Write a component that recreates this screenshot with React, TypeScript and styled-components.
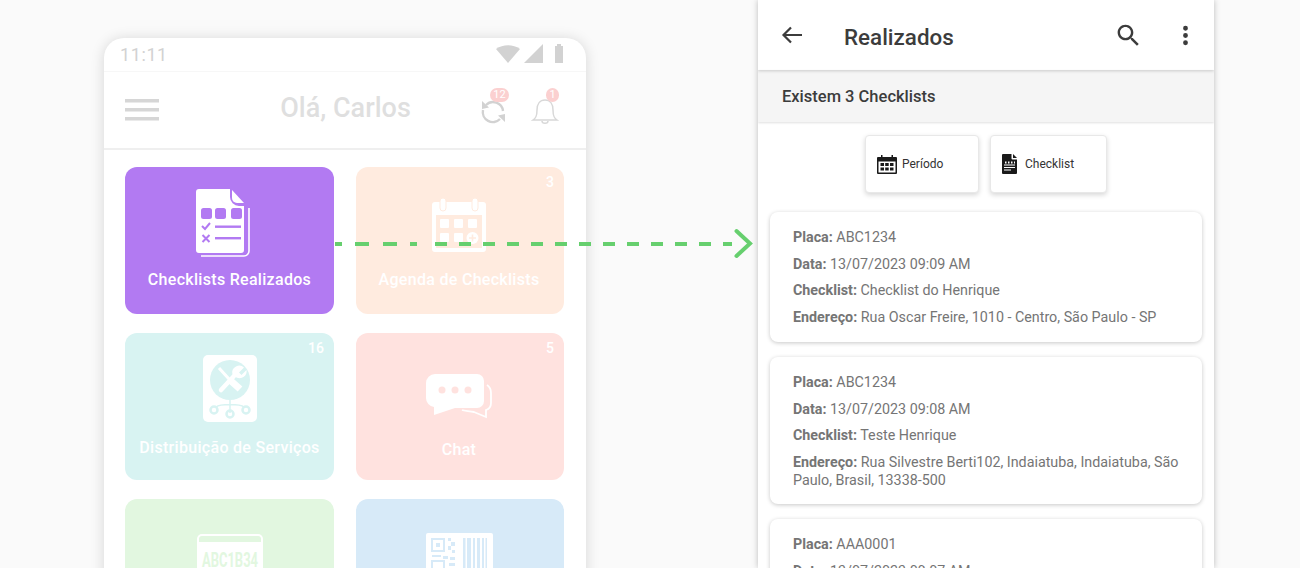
import React from "react";
import styled, { createGlobalStyle } from "styled-components";

const GlobalStyle = createGlobalStyle`
    html, body {
        margin: 0;
        padding: 0;
        height: 568px;
        overflow: hidden;
        background: #FAFAFA;
        font-family: Roboto, "Liberation Sans", sans-serif;
    }
`;

const Page = styled.div`
    position: relative;
    display: flex;
    align-items: flex-start;
    width: 1300px;
    height: 568px;
    padding-left: 104px;
    box-sizing: border-box;
    overflow: hidden;
    background: #FAFAFA;
`;

/* left phone */
const HomePhone = styled.div`
    flex: none;
    width: 482px;
    height: 560px;
    margin-top: 38px;
    background: #FFFFFF;
    border-radius: 20px 20px 0 0;
    box-shadow: 0 1px 14px rgba(0, 0, 0, 0.15);
`;
const StatusBar = styled.div`
    display: flex;
    justify-content: space-between;
    align-items: center;
    height: 33px;
    padding: 0 20px 0 16px;
    border-bottom: 1px solid #F7F7F7;
`;
const Clock = styled.span`
    font-size: 18px;
    letter-spacing: 0.6px;
    color: #D2D2D2;
`;
const StatusIcons = styled.div`
    display: flex;
    align-items: center;
`;
const HomeHeader = styled.div`
    display: flex;
    align-items: center;
    height: 76px;
    padding: 0 27px 0 21px;
    border-bottom: 2px solid #EFEFEF;
`;
const HomeTitle = styled.div`
    flex: 1;
    text-align: center;
    padding: 0 0 4px 77px;
    font-size: 27px;
    font-weight: 500;
    color: #DFDFDF;
`;
const HeaderIcon = styled.div`
    position: relative;
    width: 28px;
    height: 28px;
    margin-left: 24px;
`;
const Badge = styled.span<{ $right: number; $w: number }>`
    position: absolute;
    top: -8px;
    right: ${(p) => p.$right}px;
    width: ${(p) => p.$w}px;
    height: 14px;
    border-radius: 7px;
    background: #FBD0D0;
    color: #FFFFFF;
    font-size: 11px;
    line-height: 14px;
    text-align: center;
`;
const TileGrid = styled.div`
    display: grid;
    grid-template-columns: 209px 208px;
    grid-auto-rows: 147px;
    column-gap: 22px;
    row-gap: 19px;
    padding: 17px 0 0 21px;
`;
const Tile = styled.div<{ $bg: string }>`
    position: relative;
    display: flex;
    flex-direction: column;
    align-items: center;
    border-radius: 12px;
    background: ${(p) => p.$bg};
    color: #FFFFFF;
`;
const TileIcon = styled.div<{ $top: number; $shift: number }>`
    margin-top: ${(p) => p.$top}px;
    margin-left: ${(p) => p.$shift}px;
    svg { display: block; }
`;
const TileLabel = styled.div<{ $top: number; $pad: number }>`
    margin-top: ${(p) => p.$top}px;
    padding-right: ${(p) => p.$pad}px;
    font-size: 16px;
    line-height: 19px;
    font-weight: 500;
    letter-spacing: 0.3px;
    white-space: nowrap;
`;
const TileCount = styled.span`
    position: absolute;
    top: 7px;
    right: 10px;
    font-size: 14px;
    font-weight: 500;
`;

/* connector */
const Connector = styled.svg`
    position: absolute;
    left: 334px;
    top: 226px;
`;

/* right phone */
const ListPhone = styled.div`
    flex: none;
    width: 456px;
    height: 568px;
    margin-left: 172px;
    background: #FFFFFF;
    box-shadow: 0 0 6px rgba(0, 0, 0, 0.25);
    overflow: hidden;
`;
const ListHeader = styled.div`
    position: relative;
    display: flex;
    align-items: center;
    height: 70px;
    padding: 0 14px 0 23px;
    box-sizing: border-box;
    box-shadow: 0 1px 3px rgba(0, 0, 0, 0.18);
`;
const ListTitle = styled.div`
    flex: 1;
    margin-left: 42px;
    padding-top: 3px;
    font-size: 22.4px;
    font-weight: 500;
    color: #3C3C3C;
`;
const ToolIcon = styled.svg<{ $gap: number }>`
    display: block;
    margin-left: ${(p) => p.$gap}px;
`;
const CountBar = styled.div`
    display: flex;
    align-items: center;
    height: 52px;
    padding-left: 24px;
    background: #F5F5F5;
    box-shadow: 0 1px 2px rgba(0, 0, 0, 0.12);
    font-size: 16.5px;
    font-weight: 500;
    color: #3C3C3C;
`;
const FilterRow = styled.div`
    display: flex;
    justify-content: flex-start;
    gap: 11px;
    padding: 13px 0 0 107px;
`;
const FilterButton = styled.div<{ $w: number; $gap: number }>`
    display: flex;
    align-items: center;
    gap: ${(p) => p.$gap}px;
    width: ${(p) => p.$w}px;
    height: 58px;
    padding-left: 11px;
    box-sizing: border-box;
    border-radius: 4px;
    background: #FFFFFF;
    border: 1px solid #E8E8E8;
    box-shadow: 0 2px 5px rgba(0, 0, 0, 0.16);
    font-size: 12px;
    color: #333333;
`;
const CardList = styled.div`
    display: flex;
    flex-direction: column;
    gap: 15px;
    padding: 19px 12px 0;
`;
const Card = styled.div`
    padding: 17px 22px 15px 23px;
    border-radius: 8px;
    background: #FFFFFF;
    box-shadow: 0 1px 4px rgba(0, 0, 0, 0.22);
`;
const CardLine = styled.div`
    margin-bottom: 9px;
    font-size: 14.3px;
    line-height: 17.7px;
    color: #757575;
    &:last-child { margin-bottom: 0; }
    b { font-weight: 700; }
`;

const DocIcon = () => (
    <svg width="54" height="68" viewBox="0 0 54 68">
        <path d="M3 0h31v8a9 9 0 0 0 9 9h5v44a3 3 0 0 1-3 3H3a3 3 0 0 1-3-3V3a3 3 0 0 1 3-3z" fill="#fff" />
        <path d="M36 1l12 13h-7a5 5 0 0 1-5-5z" fill="#fff" />
        <path d="M53 19v43a5 5 0 0 1-5 5H5" fill="none" stroke="#fff" strokeWidth="1.6" />
        <g fill="#B27AF2">
            <rect x="5" y="19" width="11" height="11" rx="2.500" />
            <rect x="19" y="19" width="11" height="11" rx="2.500" />
            <rect x="35" y="19" width="11" height="11" rx="2.500" />
            <rect x="19" y="36.500" width="26" height="2.400" />
            <rect x="19" y="48" width="26" height="2.400" />
        </g>
        <path d="M6 37l3 3 5-6M6.500 46l7 7M13.500 46l-7 7" fill="none" stroke="#B27AF2" strokeWidth="2" />
    </svg>
);

const CalendarIcon = () => (
    <svg width="54" height="56" viewBox="0 0 54 56">
        <path d="M3 4h48a3 3 0 0 1 3 3v44a3 3 0 0 1-3 3H3a3 3 0 0 1-3-3V7a3 3 0 0 1 3-3zM4 17v33h46V17z" fill="#fff" fillRule="evenodd" />
        <rect x="8" y="0" width="6" height="13" rx="3" fill="#fff" stroke="#FFEBDF" strokeWidth="1" />
        <rect x="40" y="0" width="6" height="13" rx="3" fill="#fff" stroke="#FFEBDF" strokeWidth="1" />
        <g fill="#fff">
            <rect x="8" y="21" width="9" height="9" rx="1" />
            <rect x="22" y="21" width="9" height="9" rx="1" />
            <rect x="36" y="21" width="9" height="9" rx="1" />
            <rect x="8" y="35" width="9" height="9" rx="1" />
            <rect x="22" y="35" width="9" height="9" rx="1" />
            <circle cx="40.500" cy="40" r="6" />
        </g>
        <path d="M40.500 36.500v7M37 40h7" stroke="#FFEBDF" strokeWidth="1.600" />
    </svg>
);

const ToolsIcon = () => (
    <svg width="54" height="68" viewBox="0 0 54 68">
        <rect width="54" height="67" rx="5" fill="#fff" />
        <circle cx="27" cy="25" r="20" fill="#D8F3F2" />
        <path d="M16 13l10 11" stroke="#fff" strokeWidth="3" />
        <path d="M28 26l9 8" stroke="#fff" strokeWidth="7" />
        <path d="M18 35l13-14" stroke="#fff" strokeWidth="4.500" strokeLinecap="round" />
        <path d="M33 11.500a7 7 0 0 1 8 1l-5 5 2.500 2.500 5-5a7 7 0 0 1-10 7.500l-4-3a7 7 0 0 1 3.500-8z" fill="#fff" />
        <path d="M27 45v13M13 52c4-3.500 24-3.500 28 0" fill="none" stroke="#D8F3F2" strokeWidth="1.500" />
        <circle cx="11" cy="55" r="3.500" fill="none" stroke="#D8F3F2" strokeWidth="2.500" />
        <circle cx="27" cy="59" r="3.500" fill="none" stroke="#D8F3F2" strokeWidth="2.500" />
        <circle cx="43" cy="55" r="3.500" fill="none" stroke="#D8F3F2" strokeWidth="2.500" />
    </svg>
);

const ChatIcon = () => (
    <svg width="68" height="46" viewBox="0 0 68 46">
        <path d="M10 1h42a7 7 0 0 1 7 7v20a7 7 0 0 1-7 7H30L9 42v-8a9 9 0 0 1-8-9V10a9 9 0 0 1 9-9z" fill="#fff" />
        <path d="M62 12c3 2 4 5 4 8v10c0 4-2 6-5 7v7l-12-5c-5-1-10-1-12-2" fill="none" stroke="#fff" strokeWidth="1.800" />
        <g fill="#FFE2DF">
            <circle cx="17" cy="17" r="3.500" />
            <circle cx="30" cy="17" r="3.500" />
            <circle cx="43" cy="17" r="3.500" />
        </g>
    </svg>
);

const PlateIcon = () => (
    <svg width="68" height="40" viewBox="0 0 68 40">
        <path d="M6 1h56a5 5 0 0 1 5 5v34H1V6a5 5 0 0 1 5-5z" fill="#fff" />
        <path d="M6 3h56a3 3 0 0 1 3 3v3H3V6a3 3 0 0 1 3-3z" fill="#E2F7E0" />
        <text x="6" y="34" fontFamily="Roboto, sans-serif" fontSize="20" fontWeight="700" fill="#E2F7E0" textLength="56" lengthAdjust="spacingAndGlyphs">ABC1B34</text>
    </svg>
);

const CodeIcon = () => (
    <svg width="67" height="40" viewBox="0 0 67 40">
        <rect x="0" y="0" width="67" height="40" rx="2" fill="#fff" />
        <g fill="none" stroke="#D7EAF8" strokeWidth="2">
            <rect x="6" y="6" width="12" height="12" />
            <rect x="6" y="28" width="12" height="12" />
        </g>
        <g fill="#D7EAF8">
            <rect x="10" y="10" width="4" height="4" />
            <path d="M22 5h3v3h-3zM25 9h4v4h-4zM22 13h3v4h-3zM26 17h3v3h-3zM6 22h9v2H6zM17 23h5v3h-5zM24 24h5v3h-5zM23 30h6v3h-6zM25 35h4v5h-4z" />
            <path d="M37 5h2.500v35H37zM41 5h4v35h-4zM47 5h2v35h-2zM51 5h3v35h-3zM56 5h2v35h-2zM59.500 5h1.500v35h-1.500z" />
        </g>
    </svg>
);

const tiles = [
    { label: "Checklists Realizados", bg: "#B27AF2", icon: <DocIcon />, top: 22, gap: 13, shift: -13, pad: 0 },
    { label: "Agenda de Checklists", bg: "#FFEBDF", icon: <CalendarIcon />, top: 31, gap: 16, shift: -2, pad: 2, count: "3" },
    { label: "Distribuição de Serviços", bg: "#D8F3F2", icon: <ToolsIcon />, top: 22, gap: 14.5, shift: 0, pad: 0, count: "16" },
    { label: "Chat", bg: "#FFE2DF", icon: <ChatIcon />, top: 40, gap: 21, shift: -3, pad: 2, count: "5" },
    { label: "", bg: "#E2F7E0", icon: <PlateIcon />, top: 34, gap: 0, shift: 0, pad: 0 },
    { label: "", bg: "#D7EAF8", icon: <CodeIcon />, top: 34, gap: 0, shift: -2, pad: 0 },
];

const cards = [
    { placa: "ABC1234", data: "13/07/2023 09:09 AM", checklist: "Checklist do Henrique", end: "Rua Oscar Freire, 1010 - Centro, São Paulo - SP" },
    { placa: "ABC1234", data: "13/07/2023 09:08 AM", checklist: "Teste Henrique", end: "Rua Silvestre Berti102, Indaiatuba, Indaiatuba, São Paulo, Brasil, 13338-500" },
    { placa: "AAA0001", data: "13/07/2023 09:07 AM", checklist: "Teste Henrique", end: "Rua Oscar Freire" },
];

function App() {
    return (
        <Page>
            <GlobalStyle />
            <HomePhone>
                <StatusBar>
                    <Clock>11:11</Clock>
                    <StatusIcons>
                        <svg width="70" height="22" viewBox="0 0 70 22">
                            <path d="M0 5c7-5 17-5 24 0l-12 14z" fill="#D2D2D2" />
                            <path d="M28 19L47 0v19z" fill="#D2D2D2" />
                            <path d="M59 2h2V0h4v2h2v17H59z" fill="#D2D2D2" />
                        </svg>
                    </StatusIcons>
                </StatusBar>
                <HomeHeader>
                    <svg width="34" height="22" viewBox="0 0 34 22">
                        <path d="M0 0h34v3.500H0zM0 9h34v3.500H0zM0 18h34v3.500H0z" fill="#D6D6D6" />
                    </svg>
                    <HomeTitle>Olá, Carlos</HomeTitle>
                    <HeaderIcon>
                        <svg width="28" height="28" viewBox="0 0 28 28">
                            <path d="M7 9A10 10 0 0 1 24 15" fill="none" stroke="#D2D2D2" strokeWidth="2.400" />
                            <path d="M4 14A10 10 0 0 0 21 23" fill="none" stroke="#D2D2D2" strokeWidth="2.400" />
                            <path d="M3 5v8l7-1.500zM26 26v-8l-7 1.500z" fill="#D2D2D2" />
                        </svg>
                        <Badge $right={-2} $w={19}>12</Badge>
                    </HeaderIcon>
                    <HeaderIcon>
                        <svg width="28" height="28" viewBox="0 0 28 28">
                            <path d="M2 24c3-2 4-4 4-10 0-6 3-10 8-10s8 4 8 10c0 6 1 8 4 10z" fill="none" stroke="#D8D8D8" strokeWidth="1.500" />
                            <path d="M11 25c0 3 6 3 6 0" fill="none" stroke="#D8D8D8" strokeWidth="1.500" />
                        </svg>
                        <Badge $right={0} $w={13}>1</Badge>
                    </HeaderIcon>
                </HomeHeader>
                <TileGrid>
                    {tiles.map((t, i) => (
                        <Tile key={i} $bg={t.bg}>
                            {t.count && <TileCount>{t.count}</TileCount>}
                            <TileIcon $top={t.top} $shift={t.shift}>{t.icon}</TileIcon>
                            {t.label && <TileLabel $top={t.gap} $pad={t.pad}>{t.label}</TileLabel>}
                        </Tile>
                    ))}
                </TileGrid>
            </HomePhone>
            <Connector width="420" height="36" viewBox="0 0 420 36">
                <path d="M1 18H89" fill="none" stroke="#66CF6E" strokeWidth="4" strokeDasharray="7 13 14 14 14 13" />
                <path d="M101 18H398" fill="none" stroke="#66CF6E" strokeWidth="4" strokeDasharray="12 12" />
                <path d="M402.500 5L416 17.500L402.500 30" fill="none" stroke="#66CF6E" strokeWidth="4" strokeLinecap="round" />
            </Connector>
            <ListPhone>
                <ListHeader>
                    <svg width="21" height="18" viewBox="0 0 21 18">
                        <path d="M21 9H2.500M10 1.500L2.500 9l7.500 7.500" fill="none" stroke="#3C3C3C" strokeWidth="2.200" />
                    </svg>
                    <ListTitle>Realizados</ListTitle>
                    <ToolIcon $gap={0} width="29" height="29" viewBox="0 0 24 24">
                        <path d="M15.500 14h-.79l-.28-.27C15.410 12.590 16 11.110 16 9.500 16 5.910 13.090 3 9.500 3S3 5.910 3 9.500 5.910 16 9.500 16c1.610 0 3.090-.59 4.230-1.570l.27.280v.79l5 4.990L20.490 19l-4.990-5zm-6 0C7.010 14 5 11.990 5 9.500S7.010 5 9.500 5 14 7.010 14 9.500 11.990 14 9.500 14z" fill="#3C3C3C" />
                    </ToolIcon>
                    <ToolIcon $gap={28} width="29" height="29" viewBox="0 0 24 24">
                        <path d="M12 8a2 2 0 1 0 0-4 2 2 0 0 0 0 4zm0 2a2 2 0 1 0 0 4 2 2 0 0 0 0-4zm0 6a2 2 0 1 0 0 4 2 2 0 0 0 0-4z" fill="#3C3C3C" />
                    </ToolIcon>
                </ListHeader>
                <CountBar>Existem 3 Checklists</CountBar>
                <FilterRow>
                    <FilterButton $w={114} $gap={5}>
                        <svg width="20" height="20" viewBox="0 0 20 20">
                            <path d="M1 3h3V1h1.500v2h9V1H16v2h3a1 1 0 0 1 1 1v15a1 1 0 0 1-1 1H1a1 1 0 0 1-1-1V4a1 1 0 0 1 1-1zm.500 4.500v11h17v-11z" fill="#1A1A1A" fillRule="evenodd" />
                            <path d="M3.500 9h3.500v3H3.500zM8.200 9h3.500v3H8.200zM13 9h3.500v3H13zM3.500 13.500h3.500v3H3.500zM8.200 13.500h3.500v3H8.200zM13 13.500h3.500v3H13z" fill="#1A1A1A" />
                        </svg>
                        Período
                    </FilterButton>
                    <FilterButton $w={117} $gap={8}>
                        <svg width="15" height="20" viewBox="0 0 15 20">
                            <path d="M1 0h8.500v4.500a1 1 0 0 0 1 1H15V19a1 1 0 0 1-1 1H1a1 1 0 0 1-1-1V1a1 1 0 0 1 1-1zM11 0l4 4h-4z" fill="#1A1A1A" />
                            <path d="M3 7.500h1.500v2H3zM6 7.500h1.500v2H6zM9 7.500h1.500v2H9zM12 7.500h1v2h-1zM2 10.500h11v1H2zM2 13h11v1H2zM2 15.500h7v1H2z" fill="#fff" />
                        </svg>
                        Checklist
                    </FilterButton>
                </FilterRow>
                <CardList>
                    {cards.map((c, i) => (
                        <Card key={i}>
                            <CardLine><b>Placa:</b> {c.placa}</CardLine>
                            <CardLine><b>Data:</b> {c.data}</CardLine>
                            <CardLine><b>Checklist:</b> {c.checklist}</CardLine>
                            <CardLine><b>Endereço:</b> {c.end}</CardLine>
                        </Card>
                    ))}
                </CardList>
            </ListPhone>
        </Page>
    );
}

export default App;
